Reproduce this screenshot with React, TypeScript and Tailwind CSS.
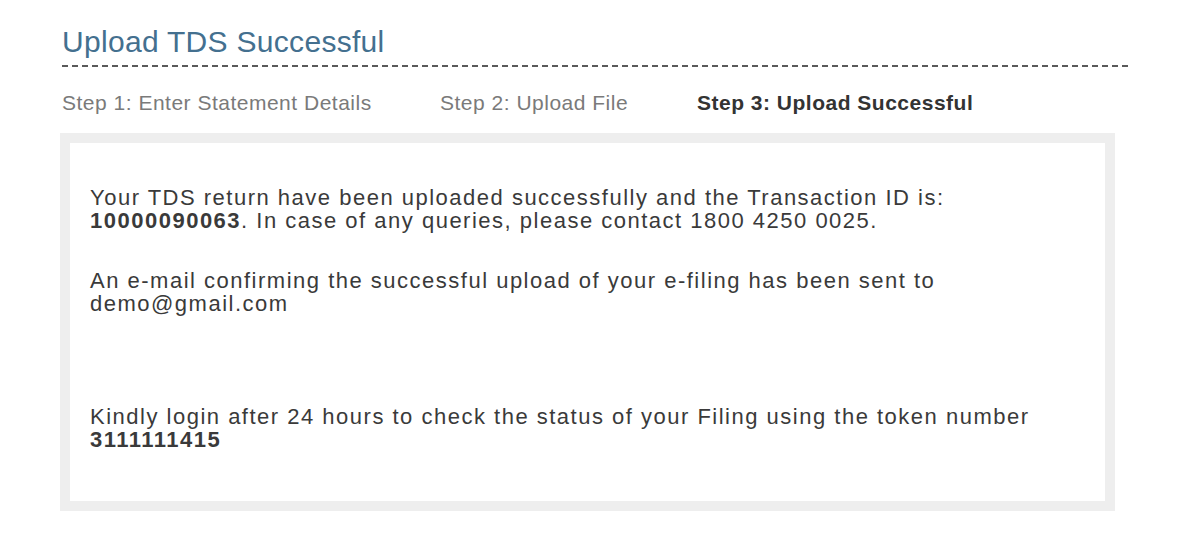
import React from "react";

export default function App() {
  return (
    <div className="w-[1193px] h-[533px] bg-white pl-[60px] pt-[25px] font-['Liberation_Sans',Arial,sans-serif]">
      <div className="pl-[2px] w-[1070px]">
        <h1 className="text-[30px] leading-[34px] tracking-[0.3px] text-[#44708f] font-normal">Upload TDS Successful</h1>
        <div className="mt-[6px] h-[2px] w-[1068px] bg-[repeating-linear-gradient(to_right,#5a5a5a_0px,#5a5a5a_6px,transparent_6px,transparent_10px)]" />
        <div className="mt-[24px] flex text-[21px] leading-[24px] tracking-[0.5px]">
          <span className="w-[378px] text-[#7a7a7a]">Step 1: Enter Statement Details</span>
          <span className="w-[257px] text-[#7a7a7a]">Step 2: Upload File</span>
          <span className="font-bold text-[#333333]">Step 3: Upload Successful</span>
        </div>
      </div>
      <div className="mt-[18px] w-[1055px] border-[10px] border-[#eeeeee] bg-white pl-[20px] pr-[20px] pt-[43px] pb-[50px] text-[22px] leading-[23px] tracking-[1.5px] text-[#3a3a3a]">
        <p>
          Your TDS return have been uploaded successfully and the Transaction ID is:
          <br />
          <b>10000090063</b>. In case of any queries, please contact 1800 4250 0025.
        </p>
        <p className="mt-[37px]">
          An e-mail confirming the successful upload of your e-filing has been sent to
          <br />
          demo@gmail.com
        </p>
        <p className="mt-[90px]">
          Kindly login after 24 hours to check the status of your Filing using the token number
          <br />
          <b>3111111415</b>
        </p>
      </div>
    </div>
  );
}
